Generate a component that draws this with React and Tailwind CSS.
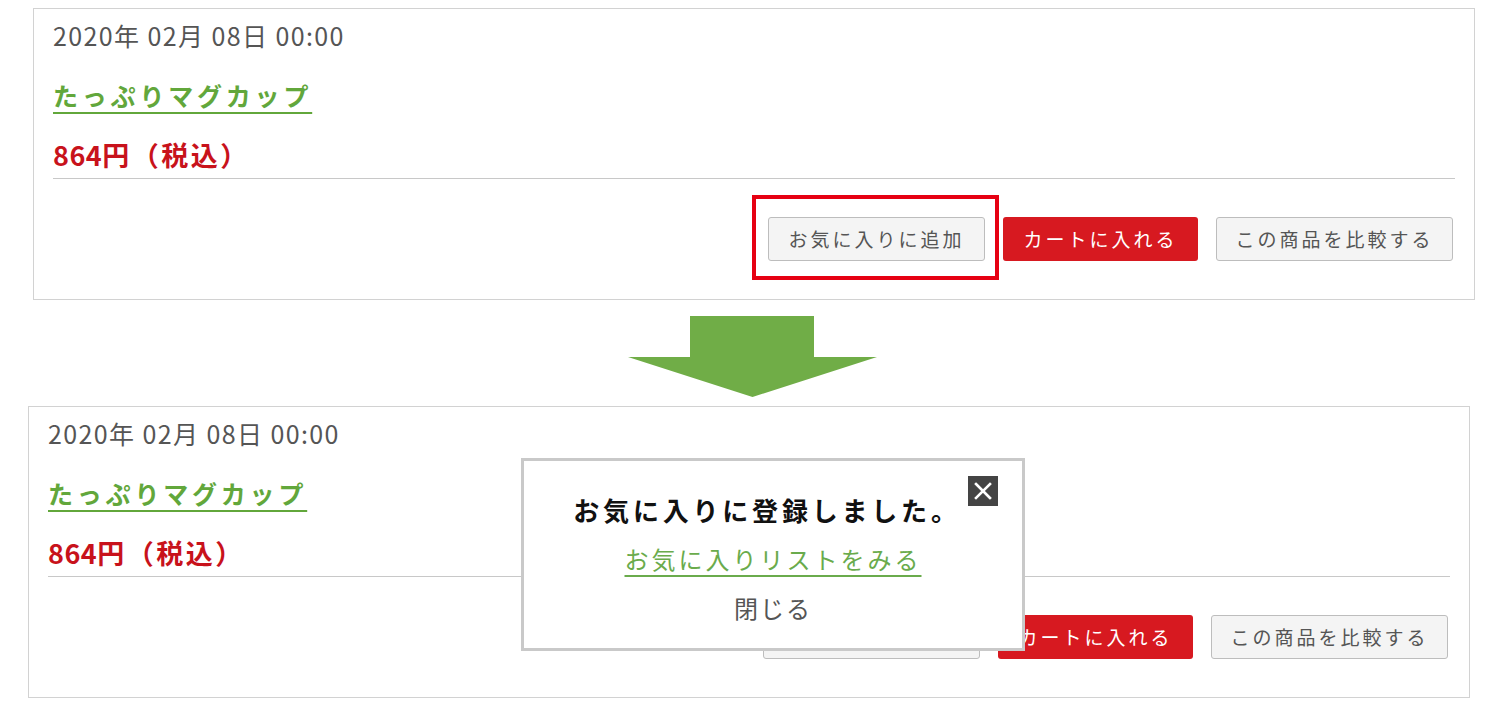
import React from "react";

const font = { fontFamily: '"Noto Sans CJK JP", "Noto Sans", sans-serif' };

function Buttons({ highlight }) {
  return (
    <div className="flex justify-end gap-[18px] mt-[38px]">
      <div className="relative">
        {highlight && (
          <div className="absolute -left-4 -right-[14px] -top-[22px] -bottom-[19px] border-4 border-[#e60012] pointer-events-none" />
        )}
        <button className="h-[44px] w-[217px] rounded-[3px] border border-[#bdbdbd] bg-[#f4f4f4] text-[19px] tracking-[3px] text-[#555] flex items-center justify-center">
          お気に入りに追加
        </button>
      </div>
      <button className="h-[44px] w-[195px] rounded-[3px] bg-[#d71920] text-[19px] tracking-[3px] text-white flex items-center justify-center">
        カートに入れる
      </button>
      <button className="h-[44px] w-[237px] rounded-[3px] border border-[#bdbdbd] bg-[#f4f4f4] text-[19px] tracking-[3px] text-[#555] flex items-center justify-center">
        この商品を比較する
      </button>
    </div>
  );
}

function Card({ highlight, children, className }) {
  return (
    <div className={`relative w-[1442px] border border-[#d2d2d2] bg-white pl-[19px] pr-[21px] pt-[8px] pb-[38px] ${className}`}>
      <div className="flex flex-col gap-6">
        <div className="h-[36px] leading-[36px] text-[25px] tracking-[1.4px] text-[#555]">
          2020年 02月 08日 00:00
        </div>
        <div className="h-[36px] leading-[36px]">
          <a className="text-[25px] font-bold tracking-[3.8px] text-[#62a73b] underline decoration-[2px] underline-offset-[6px]">
            たっぷりマグカップ
          </a>
        </div>
        <div className="h-[36px] leading-[36px] text-[27px] font-bold text-[#c8121b]">
          <span className="tracking-[0.5px]">864</span>
          <span className="tracking-[2.5px]">円（税込）</span>
        </div>
      </div>
      <div className="mt-[5px] mr-[-2px] h-px bg-[#c8c8c8]" />
      <Buttons highlight={highlight} />
      {children}
    </div>
  );
}

export default function App() {
  return (
    <div className="w-[1507px] h-[711px] bg-white overflow-hidden pt-[8px]" style={font}>
      <Card highlight className="ml-[33px]" />
      <div className="ml-[628px] mt-[16px] mb-[9px] h-[81px] w-[249px]">
        <svg width="249" height="81" viewBox="0 0 249 81">
          <polygon points="62,0 186,0 186,41 249,41 124.5,81 0,41 62,41" fill="#70ad47" />
        </svg>
      </div>
      <Card className="ml-[28px]">
        <div className="absolute left-[492px] top-[51px] w-[504px] h-[193px] border-[3px] border-[#c9c9c9] bg-white flex flex-col items-center pt-[31px] gap-[13px]">
          <div className="h-[36px] leading-[36px] pr-3 text-[26px] font-bold tracking-[3.8px] text-[#111]">
            お気に入りに登録しました。
          </div>
          <div className="h-[36px] leading-[36px]">
            <a className="text-[24px] tracking-[3px] text-[#6aab4c] underline decoration-[2px] underline-offset-[6px]">
              お気に入りリストをみる
            </a>
          </div>
          <div className="h-[36px] leading-[36px] text-[24px] tracking-[2px] text-[#555]">
            閉じる
          </div>
          <button className="absolute left-[444px] top-[15px] w-[30px] h-[30px] bg-[#444] flex items-center justify-center">
            <svg width="20" height="20" viewBox="0 0 20 20">
              <path d="M3 3 L17 17 M17 3 L3 17" stroke="#fff" strokeWidth="2.6" strokeLinecap="square" />
            </svg>
          </button>
        </div>
      </Card>
    </div>
  );
}
